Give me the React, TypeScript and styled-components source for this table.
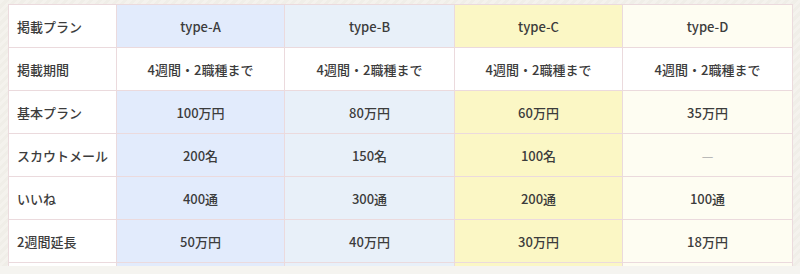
import React from 'react';
import styled, { createGlobalStyle } from 'styled-components';

const GlobalStyle = createGlobalStyle`
  html, body {
    margin: 0;
    padding: 0;
  }
  body {
    background-color: #f3f1ec;
    background-image: repeating-linear-gradient(
      -45deg,
      #f4f2ed 0px,
      #f4f2ed 3px,
      #f0eee8 3px,
      #f0eee8 6px
    );
    font-family: "Noto Sans CJK JP", "Noto Sans", sans-serif;
    color: #3c3c3c;
  }
`;

const Page = styled.div`
  width: 800px;
  height: 274px;
  display: flex;
  flex-direction: column;
  overflow: hidden;
`;

const Viewport = styled.div`
  height: 266px;
  padding: 4px 8px 0;
  box-sizing: border-box;
  overflow: hidden;
`;

const BottomStrip = styled.div`
  flex: 1;
  background: #f5f4f0;
`;

const Table = styled.table`
  width: 784px;
  border-collapse: collapse;
  table-layout: fixed;
  background: #fff;
`;

const Col = styled.col<{ $w: number }>`
  width: ${(p) => p.$w}px;
`;

type Tone = 'a' | 'b' | 'c' | 'd' | 'plain';

const tones: Record<Tone, string> = {
  a: '#e2ebfc',
  b: '#e8f0f9',
  c: '#fbf7c5',
  d: '#fefdf2',
  plain: '#ffffff',
};

const Cell = styled.td<{ $tone: Tone }>`
  height: 42px;
  padding: 0 8px;
  border: 1px solid #ebdadd;
  background: ${(p) => tones[p.$tone]};
  text-align: center;
  font-size: 13px;
  font-weight: 500;
  color: #3c3c3c;
  white-space: nowrap;
`;

const LabelCell = styled.th`
  height: 42px;
  padding: 0 8px;
  border: 1px solid #ebdadd;
  background: #fff;
  text-align: left;
  font-size: 13px;
  font-weight: 500;
  color: #3c3c3c;
  white-space: nowrap;
`;

const Dash = styled.span`
  color: #aaa;
  font-weight: 400;
`;

const plans: Tone[] = ['a', 'b', 'c', 'd'];
const widths = [108, 168, 170, 168, 170];

const rows: { label: string; values: string[]; shaded: boolean }[] = [
  { label: '掲載プラン', values: ['type-A', 'type-B', 'type-C', 'type-D'], shaded: true },
  { label: '掲載期間', values: ['4週間・2職種まで', '4週間・2職種まで', '4週間・2職種まで', '4週間・2職種まで'], shaded: false },
  { label: '基本プラン', values: ['100万円', '80万円', '60万円', '35万円'], shaded: true },
  { label: 'スカウトメール', values: ['200名', '150名', '100名', '—'], shaded: true },
  { label: 'いいね', values: ['400通', '300通', '200通', '100通'], shaded: true },
  { label: '2週間延長', values: ['50万円', '40万円', '30万円', '18万円'], shaded: true },
  { label: '', values: ['', '', '', ''], shaded: true },
];

const App = () => (
  <>
    <GlobalStyle />
    <Page>
      <Viewport>
        <Table>
          <colgroup>
            {widths.map((w, i) => (
              <Col key={i} $w={w} />
            ))}
          </colgroup>
          <tbody>
            {rows.map((row, r) => (
              <tr key={r}>
                <LabelCell>{row.label}</LabelCell>
                {row.values.map((v, i) => (
                  <Cell key={i} $tone={row.shaded ? plans[i] : 'plain'}>
                    {v === '—' ? <Dash>—</Dash> : v}
                  </Cell>
                ))}
              </tr>
            ))}
          </tbody>
        </Table>
      </Viewport>
      <BottomStrip />
    </Page>
  </>
);

export default App;
